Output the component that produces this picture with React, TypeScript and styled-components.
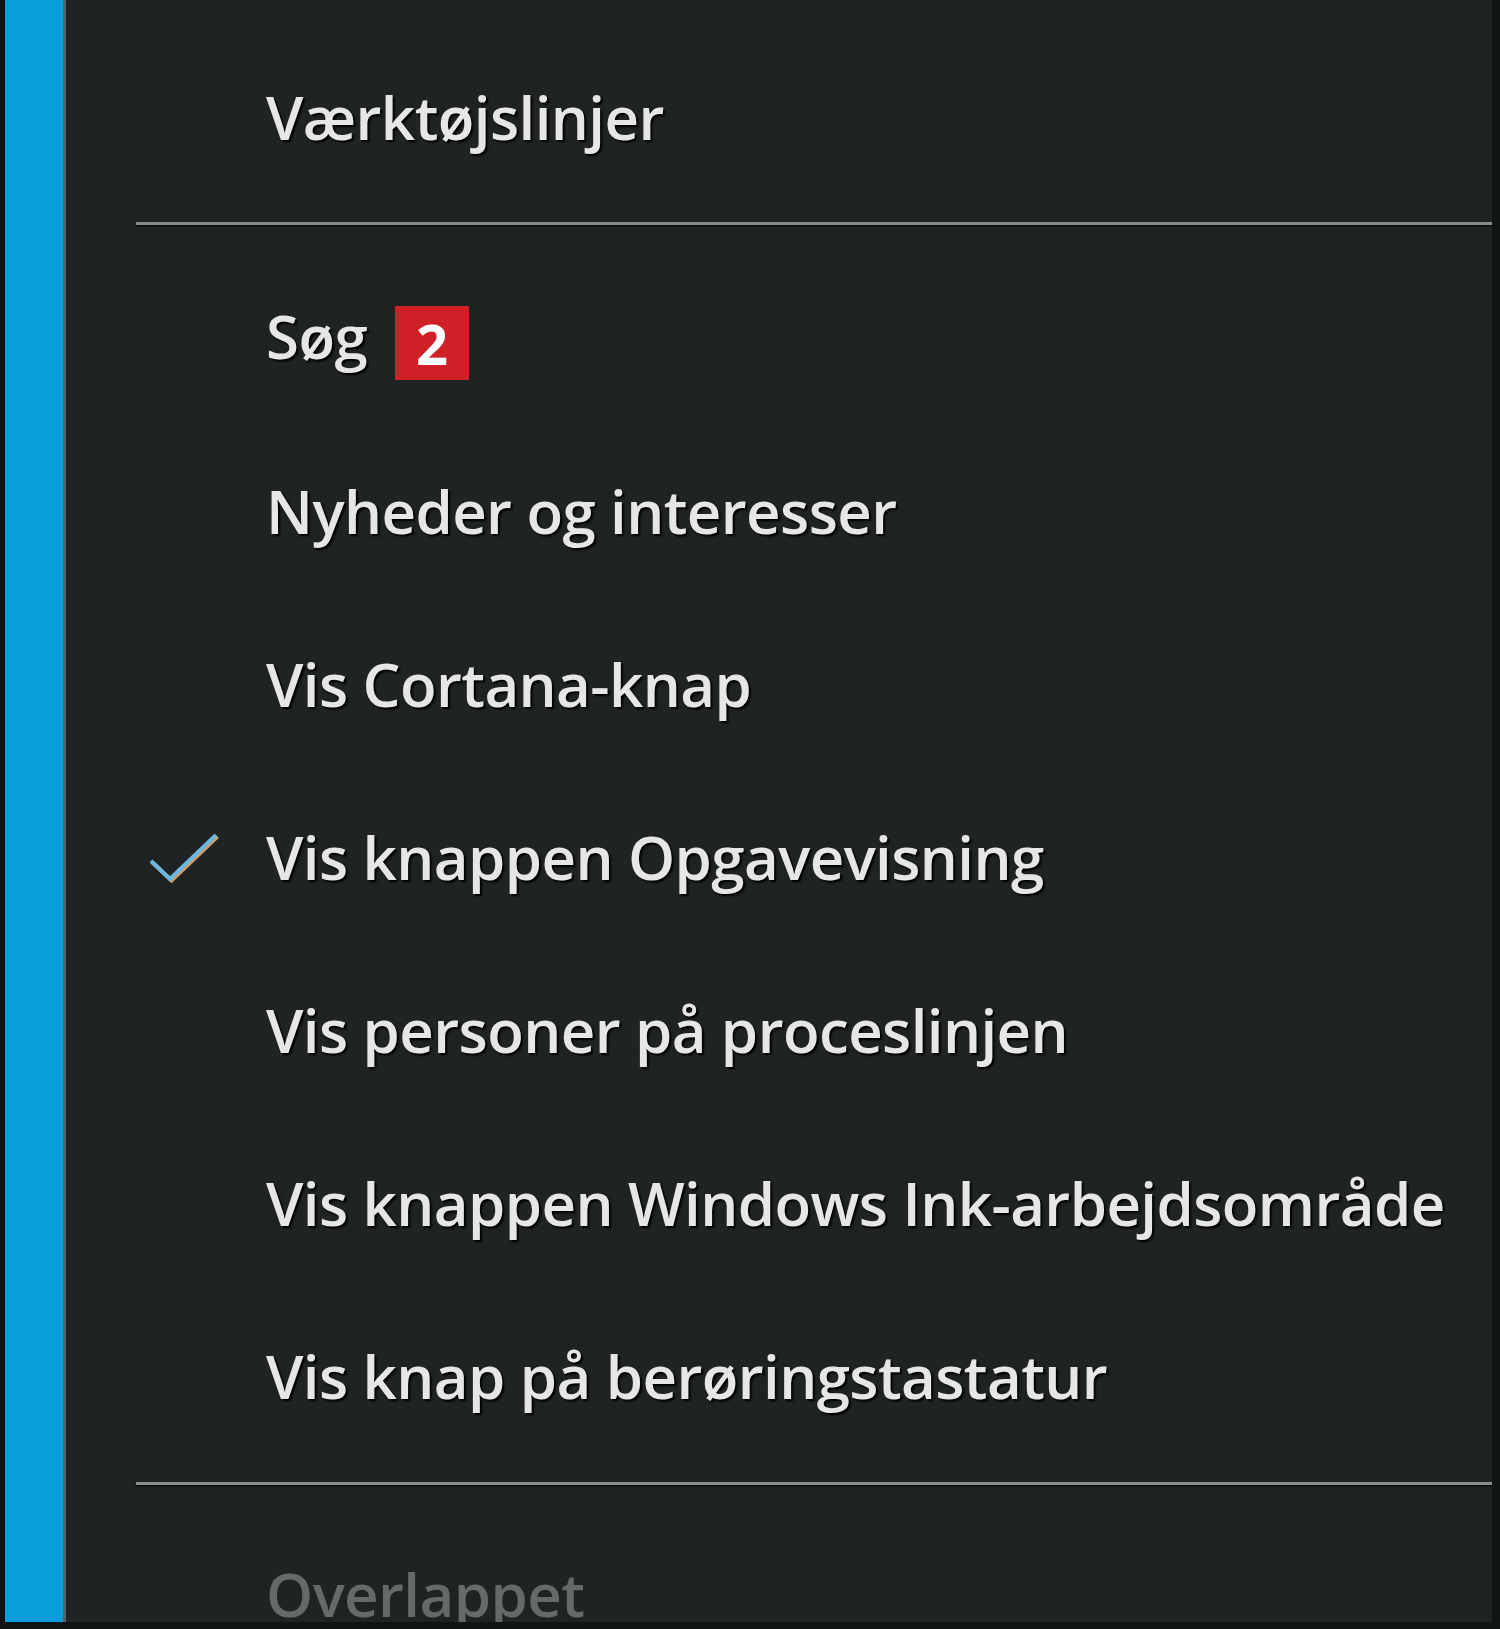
import styled, { createGlobalStyle } from 'styled-components';

const GlobalStyle = createGlobalStyle`
  html, body {
    margin: 0;
    padding: 0;
    background: #0d0f10;
  }
`;

const Screen = styled.div`
  width: 1500px;
  height: 1629px;
  display: flex;
  overflow: hidden;
  background: #111415;
  padding: 0 8px 7px 5px;
  box-sizing: border-box;
`;

const AccentBar = styled.div`
  width: 58px;
  flex-shrink: 0;
  background: #0a9ddb;
  border-right: 3px solid #5b6366;
`;

const Menu = styled.div`
  flex: 1;
  display: flex;
  flex-direction: column;
  background: #1f2324;
  padding-top: 30px;
  overflow: hidden;
  font-family: 'Open Sans', 'Noto Sans', sans-serif;
`;

const Item = styled.div`
  height: 173px;
  flex-shrink: 0;
  display: flex;
  align-items: center;
`;

const CheckCell = styled.div`
  width: 200px;
  flex-shrink: 0;
  display: flex;
  align-items: center;
  justify-content: flex-end;
  padding-right: 46px;
  box-sizing: border-box;
`;

const Label = styled.span<{ $disabled?: boolean }>`
  font-size: 60px;
  font-weight: 600;
  letter-spacing: -0.6px;
  white-space: nowrap;
  color: ${(p) => (p.$disabled ? '#66696a' : '#e6e6e6')};
  text-shadow: ${(p) => (p.$disabled ? 'none' : '2px 2px 2px #000')};
`;

const Badge = styled.span`
  display: inline-flex;
  align-items: center;
  justify-content: center;
  width: 74px;
  height: 74px;
  margin-left: 28px;
  background: #cf2027;
  color: #fff;
  font-size: 56px;
  font-weight: 700;
  letter-spacing: 0;
  text-shadow: none;
  vertical-align: middle;
`;

const Separator = styled.div<{ $top: number; $bottom: number }>`
  flex-shrink: 0;
  height: 3px;
  margin: ${(p) => p.$top}px 0 ${(p) => p.$bottom}px 70px;
  background: #8a8c8d;
  box-shadow: 0 1px 2px #000;
`;

function Check() {
  return (
    <svg width="72" height="52" viewBox="0 0 72 52">
      <path
        d="M3 30 L22 48 L68 4"
        fill="none"
        stroke="#d99a5c"
        strokeWidth="4"
        transform="translate(1.5 1.5)"
      />
      <path d="M3 30 L22 48 L68 4" fill="none" stroke="#6ab8e0" strokeWidth="4" />
    </svg>
  );
}

const items: { label: string; checked?: boolean; badge?: string }[] = [
  { label: 'Søg', badge: '2' },
  { label: 'Nyheder og interesser' },
  { label: 'Vis Cortana-knap' },
  { label: 'Vis knappen Opgavevisning', checked: true },
  { label: 'Vis personer på proceslinjen' },
  { label: 'Vis knappen Windows Ink-arbejdsområde' },
  { label: 'Vis knap på berøringstastatur' },
];

export default function App() {
  return (
    <>
      <GlobalStyle />
      <Screen>
        <AccentBar />
        <Menu>
          <Item>
            <CheckCell />
            <Label>Værktøjslinjer</Label>
          </Item>
          <Separator $top={19} $bottom={26} />
          {items.map((it) => (
            <Item key={it.label}>
              <CheckCell>{it.checked && <Check />}</CheckCell>
              <Label>
                {it.label}
                {it.badge && <Badge>{it.badge}</Badge>}
              </Label>
            </Item>
          ))}
          <Separator $top={20} $bottom={22} />
          <Item>
            <CheckCell />
            <Label $disabled>Overlappet</Label>
          </Item>
        </Menu>
      </Screen>
    </>
  );
}
